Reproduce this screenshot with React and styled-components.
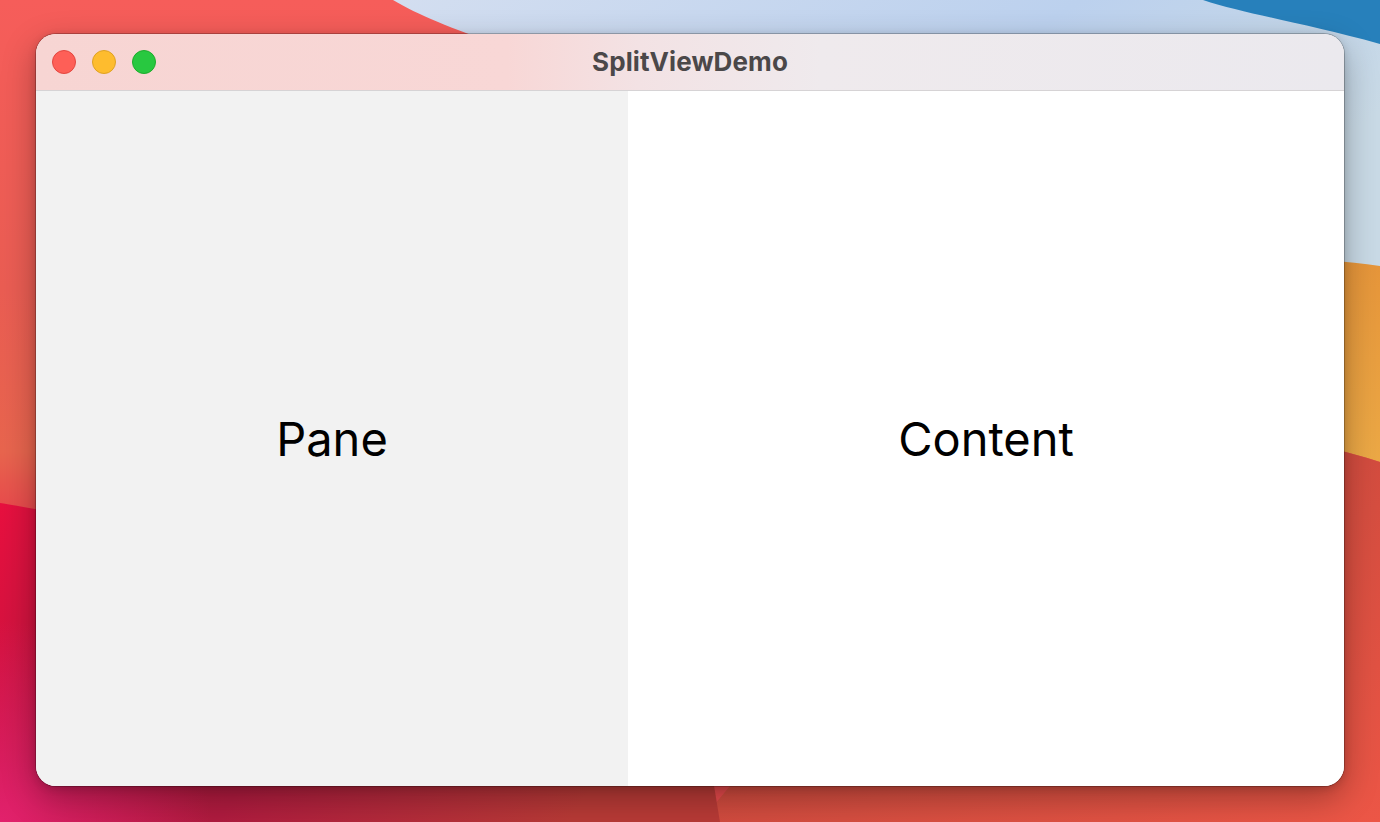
import React from 'react'
import styled, { createGlobalStyle } from 'styled-components'

const GlobalStyle = createGlobalStyle`
  html, body {
    margin: 0;
    padding: 0;
    width: 1380px;
    height: 822px;
    overflow: hidden;
    font-family: Inter, "Noto Sans", "Liberation Sans", sans-serif;
  }
`

const Desktop = styled.div`
  position: relative;
  width: 1380px;
  height: 822px;
  box-sizing: border-box;
  padding: 34px 36px 36px 36px;
  display: flex;
  background: #e8564c;
`

const Wallpaper = styled.svg`
  position: absolute;
  inset: 0;
  width: 100%;
  height: 100%;
`

const Window = styled.div`
  position: relative;
  flex: 1;
  display: flex;
  flex-direction: column;
  border-radius: 20px;
  overflow: hidden;
  background: #ffffff;
  box-shadow: 0 0 0 1px rgba(0, 0, 0, 0.22), 0 12px 34px rgba(0, 0, 0, 0.3),
    0 2px 8px rgba(0, 0, 0, 0.16);
`

const TitleBar = styled.div`
  position: relative;
  height: 57px;
  flex: none;
  display: flex;
  align-items: center;
  justify-content: center;
  box-sizing: border-box;
  padding-bottom: 2px;
  border-bottom: 1px solid #d6d3d5;
  background: linear-gradient(
    90deg,
    #f7d5d3 0%,
    #f8d7d6 36%,
    #f3e2e4 46%,
    #efeaed 60%,
    #ebe9ee 100%
  );
`

const Lights = styled.div`
  position: absolute;
  left: 16px;
  top: 16px;
  display: flex;
  gap: 16px;
`

const Light = styled.span`
  width: 24px;
  height: 24px;
  box-sizing: border-box;
  border-radius: 50%;
  background: ${(props) => props.fill};
  border: 1px solid ${(props) => props.edge};
`

const Title = styled.div`
  font-size: 26px;
  font-weight: 700;
  color: #4b4849;
  letter-spacing: 0.1px;
`

const Split = styled.div`
  flex: 1;
  display: flex;
`

const Panel = styled.div`
  width: ${(props) => props.width || 'auto'};
  flex: ${(props) => (props.width ? 'none' : 1)};
  display: flex;
  align-items: center;
  justify-content: center;
  background: ${(props) => props.bg};
  font-size: 47px;
  color: #000000;
`

export default function App() {
  return (
    <>
      <GlobalStyle />
      <Desktop>
        <Wallpaper viewBox="0 0 1380 822" preserveAspectRatio="none">
          <defs>
            <linearGradient id="coral" x1="0" y1="0" x2="0" y2="1">
              <stop offset="0" stopColor="#f65d5a" />
              <stop offset="0.35" stopColor="#ea5d53" />
              <stop offset="0.55" stopColor="#e8654e" />
              <stop offset="0.62" stopColor="#e84a4c" />
            </linearGradient>
            <linearGradient id="sky" x1="0" y1="0" x2="1" y2="0.4">
              <stop offset="0" stopColor="#d3def0" />
              <stop offset="0.6" stopColor="#bcd1ee" />
              <stop offset="1" stopColor="#c9dae6" />
            </linearGradient>
            <linearGradient id="orange" x1="0" y1="0" x2="0" y2="1">
              <stop offset="0" stopColor="#e6953a" />
              <stop offset="1" stopColor="#eca946" />
            </linearGradient>
            <linearGradient id="crimson" x1="0" y1="0" x2="1" y2="0.3">
              <stop offset="0" stopColor="#e8103f" />
              <stop offset="0.3" stopColor="#b8173f" />
              <stop offset="0.55" stopColor="#b01b3f" />
              <stop offset="1" stopColor="#b83a36" />
            </linearGradient>
            <linearGradient id="ember" x1="0" y1="0" x2="1" y2="1">
              <stop offset="0" stopColor="#b83c36" />
              <stop offset="0.6" stopColor="#d64e40" />
              <stop offset="1" stopColor="#ec5646" />
            </linearGradient>
            <radialGradient id="pink" cx="0" cy="1" r="0.5">
              <stop offset="0" stopColor="#e2216c" />
              <stop offset="1" stopColor="#e2216c" stopOpacity="0" />
            </radialGradient>
          </defs>
          <rect width="1380" height="822" fill="url(#coral)" />
          <path d="M393,0 C420,16 450,28 520,52 L1000,280 L1380,280 L1380,0 Z" fill="url(#sky)" />
          <path d="M1203,0 C1245,14 1300,22 1380,44 L1380,0 Z" fill="#2780bb" />
          <path d="M1000,300 C1150,250 1280,252 1380,266 L1380,462 C1250,420 1100,420 1000,430 Z" fill="url(#orange)" />
          <path d="M1000,430 C1100,420 1250,420 1380,462 L1380,822 L700,822 C800,700 900,600 1000,430 Z" fill="url(#ember)" />
          <path d="M0,503 C60,512 300,560 700,700 L720,822 L0,822 Z" fill="url(#crimson)" />
          <rect x="0" y="420" width="420" height="402" fill="url(#pink)" />
        </Wallpaper>
        <Window>
          <TitleBar>
            <Lights>
              <Light fill="#fe5f57" edge="#e2463f" />
              <Light fill="#febc2e" edge="#dea123" />
              <Light fill="#28c840" edge="#1dac2c" />
            </Lights>
            <Title>SplitViewDemo</Title>
          </TitleBar>
          <Split>
            <Panel width="592px" bg="#f2f2f2">Pane</Panel>
            <Panel bg="#ffffff">Content</Panel>
          </Split>
        </Window>
      </Desktop>
    </>
  )
}
